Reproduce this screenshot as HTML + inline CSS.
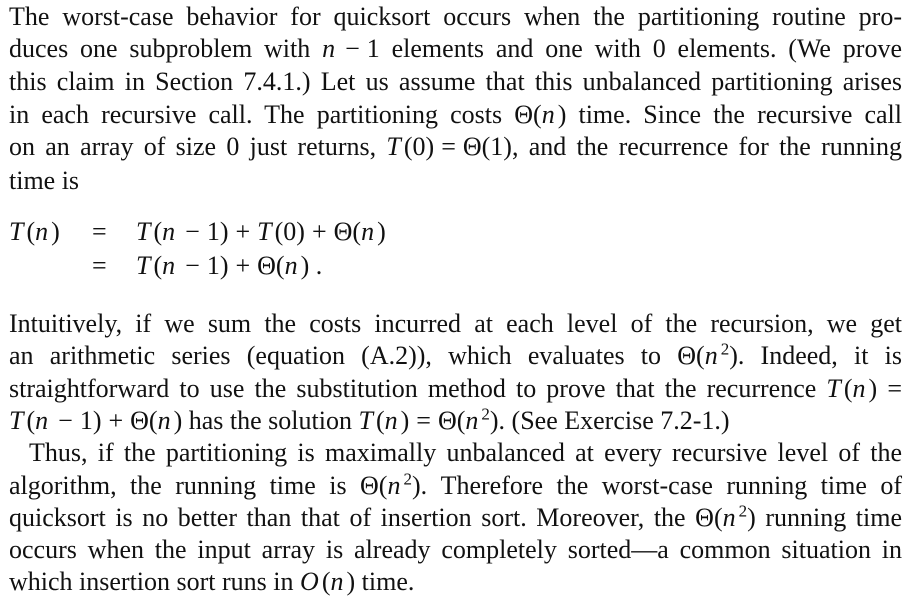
<!DOCTYPE html>
<html><head><meta charset="utf-8"><style>
body{margin:0;width:913px;height:607px;background:#fff;overflow:hidden;font-family:"Liberation Serif",serif;font-size:26px;color:#111;}
.l{position:absolute;left:9px;width:893px;height:33px;line-height:33px;text-align:justify;text-align-last:justify;white-space:nowrap;}
.n{text-align-last:left;}
i{font-style:italic;margin-right:3px;}
b{font-weight:normal;display:inline-block;margin:0 7px;}
.a{position:absolute;line-height:33px;white-space:nowrap;}
sup{font-size:17px;line-height:0;}
</style></head><body>
<div class="l" style="top:0">The worst-case behavior for quicksort occurs when the partitioning routine pro-</div>
<div class="l" style="top:32px">duces one subproblem with <i>n</i><b>−</b>1 elements and one with 0 elements. (We prove</div>
<div class="l" style="top:65px">this claim in Section 7.4.1.) Let us assume that this unbalanced partitioning arises</div>
<div class="l" style="top:98px">in each recursive call. The partitioning costs Θ(<i>n</i>) time. Since the recursive call</div>
<div class="l" style="top:130px">on an array of size 0 just returns, <i>T</i>(0)<b>=</b>Θ(1), and the recurrence for the running</div>
<div class="l n" style="top:164px">time is</div>
<div class="a" style="top:215px;left:9px"><i>T</i>(<i>n</i>)</div>
<div class="a" style="top:215px;left:92px">=</div>
<div class="a" style="top:215px;left:136px"><i>T</i>(<i>n</i><b>−</b>1)<b>+</b><i>T</i>(0)<b>+</b>Θ(<i>n</i>)</div>
<div class="a" style="top:249px;left:92px">=</div>
<div class="a" style="top:249px;left:136px"><i>T</i>(<i>n</i><b>−</b>1)<b>+</b>Θ(<i>n</i>) .</div>
<div class="l" style="top:307px">Intuitively, if we sum the costs incurred at each level of the recursion, we get</div>
<div class="l" style="top:339px">an arithmetic series (equation (A.2)), which evaluates to Θ(<i>n</i><sup>2</sup>). Indeed, it is</div>
<div class="l" style="top:372px">straightforward to use the substitution method to prove that the recurrence <i>T</i>(<i>n</i>) =</div>
<div class="l n" style="top:404px"><i>T</i>(<i>n</i><b>−</b>1)<b>+</b>Θ(<i>n</i>) has the solution <i>T</i>(<i>n</i>)<b>=</b>Θ(<i>n</i><sup>2</sup>). (See Exercise 7.2-1.)</div>
<div class="l" style="top:436px;left:29px;width:873px">Thus, if the partitioning is maximally unbalanced at every recursive level of the</div>
<div class="l" style="top:469px">algorithm, the running time is Θ(<i>n</i><sup>2</sup>). Therefore the worst-case running time of</div>
<div class="l" style="top:501px">quicksort is no better than that of insertion sort. Moreover, the Θ(<i>n</i><sup>2</sup>) running time</div>
<div class="l" style="top:533px">occurs when the input array is already completely sorted—a common situation in</div>
<div class="l n" style="top:565px">which insertion sort runs in <i>O</i>(<i>n</i>) time.</div>
</body></html>
